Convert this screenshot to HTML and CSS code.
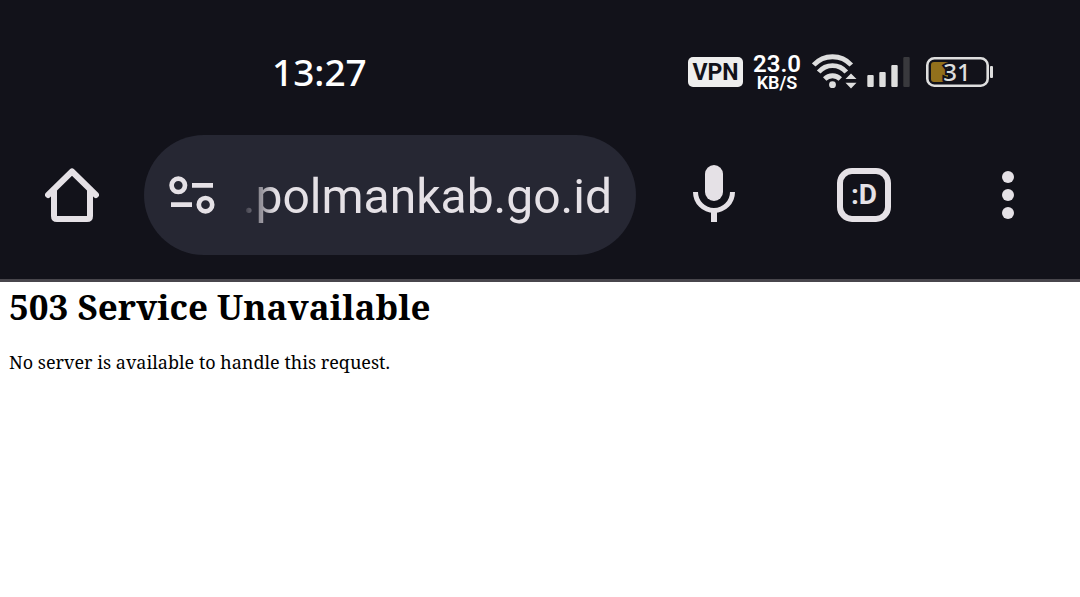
FILE: index.html
```html
<!DOCTYPE html>
<html lang="en">
<head>
  <meta charset="UTF-8">
  <meta name="viewport" content="width=device-width, initial-scale=1.0">
  <title>503 Service Unavailable</title>
  <link rel="stylesheet" href="styles.css">
</head>
<body>
  <header class="browser">
    <div class="status">
      <time class="clock">13:27</time>
      <div class="indicators">
        <span class="vpn">VPN</span>
        <div class="speed">
          <span class="speed-value">23.0</span>
          <span class="speed-unit">KB/S</span>
        </div>
        <svg class="ico-wifi" width="46" height="36" viewBox="0 0 46 36" aria-hidden="true">
          <g fill="none" stroke="#dedede" stroke-width="4.8">
            <path d="M1.7 11A25.5 25.5 0 0 1 39.3 11"/>
            <path d="M6.7 18A18 18 0 0 1 34.3 18"/>
            <path d="M12.7 25A11 11 0 0 1 28.3 25"/>
          </g>
          <circle cx="20.5" cy="30.7" r="3.4" fill="#dedede"/>
          <path d="M33.5 25L39 19.5L44.5 25ZM33.5 28.7H44.5L39 34.5Z" fill="#dedede"/>
        </svg>
        <svg class="ico-signal" width="43" height="30" viewBox="0 0 43 30" aria-hidden="true">
          <g fill="#dedede">
            <rect x="0.3" y="18" width="6.4" height="12" rx="1"/>
            <rect x="12.3" y="15" width="6.4" height="15" rx="1"/>
            <rect x="24.3" y="8" width="6.4" height="22" rx="1"/>
          </g>
          <rect x="36.3" y="0" width="6.4" height="30" rx="1" fill="#39393d"/>
        </svg>
        <div class="battery">
          <svg width="67" height="30" viewBox="0 0 67 30" aria-hidden="true">
            <rect x="1.3" y="1.3" width="60.4" height="27.4" rx="7" fill="none" stroke="#dedede" stroke-width="2.6"/>
            <path d="M8 5H22V25H8Q5 25 5 22V8Q5 5 8 5Z" fill="#92701c"/>
            <rect x="64" y="9" width="3" height="12" rx="1" fill="#dedede"/>
          </svg>
          <span class="battery-level">31</span>
        </div>
      </div>
    </div>

    <nav class="toolbar">
      <button class="tool" type="button" aria-label="Home">
        <svg width="54" height="54" viewBox="0 0 54 54" fill="none" stroke="#e5e1e6" stroke-width="6" stroke-linecap="round" stroke-linejoin="round">
          <path d="M3 27L27 3.5L51 27"/>
          <path d="M9 22V48Q9 51 12 51H42Q45 51 45 48V22"/>
        </svg>
      </button>
      <div class="address">
        <button class="site" type="button" aria-label="Site settings">
          <svg width="47" height="38" viewBox="0 0 47 38" fill="none" stroke="#e5e1e6" stroke-width="4.7">
            <circle cx="9.3" cy="9.3" r="6.7"/>
            <circle cx="36.5" cy="28.7" r="6.7"/>
            <path d="M23 9.3H44M2 28.7H23"/>
          </svg>
        </button>
        <input class="url" type="text" value=".polmankab.go.id" aria-label="Address">
      </div>
      <button class="tool tool-mic" type="button" aria-label="Voice search">
        <svg width="42" height="60" viewBox="0 0 42 60">
          <rect x="12" y="0" width="18" height="36" rx="9" fill="#e5e1e6"/>
          <path d="M2.5 27A18.5 18.5 0 0 0 39.5 27" fill="none" stroke="#e5e1e6" stroke-width="5"/>
          <rect x="18" y="46" width="6" height="11" fill="#e5e1e6"/>
        </svg>
      </button>
      <button class="tool" type="button" aria-label="Tabs">
        <span class="tabs">:D</span>
      </button>
      <button class="tool" type="button" aria-label="Menu">
        <svg width="12" height="48" viewBox="0 0 12 48" fill="#e5e1e6">
          <circle cx="6" cy="6" r="6"/>
          <circle cx="6" cy="24" r="6"/>
          <circle cx="6" cy="42" r="6"/>
        </svg>
      </button>
    </nav>
  </header>

  <main class="page">
    <h1>503 Service Unavailable</h1>
    <p>No server is available to handle this request.</p>
  </main>
</body>
</html>
```
FILE: styles.css
```css
body {
    margin: 0;
    background-color: #fff;
}

button, input {
    margin: 0;
    padding: 0;
    border: none;
    background: none;
    font-family: Roboto, sans-serif;
    color: #e5e1e6;
}

svg {
    display: block;
}

.browser {
    background-color: #12121a;
    border-bottom: 3px solid #48464c;
}

/* status bar */
.status {
    display: flex;
    justify-content: space-between;
    align-items: center;
    height: 36px;
    padding: 54px 87px 45px 272px;
    font-family: "Noto Sans", sans-serif;
    color: #fff;
}

.clock {
    font-size: 37px;
    font-weight: 500;
    line-height: 38px;
}

.indicators {
    display: flex;
    align-items: center;
}

.vpn {
    width: 55px;
    padding-top: 2px;
    border-radius: 5px;
    background-color: #eee;
    font-family: Roboto, sans-serif;
    font-size: 23px;
    font-weight: 700;
    line-height: 28px;
    text-align: center;
    color: #12121a;
}

.speed {
    display: flex;
    flex-direction: column;
    align-items: center;
    width: 50px;
    margin: 0 10px 0 9px;
    padding-top: 2px;
    font-family: Roboto, sans-serif;
    font-weight: 600;
}
.speed-value {
    font-size: 24px;
    line-height: 20px;
}
.speed-unit {
    font-size: 18px;
    line-height: 18px;
}

.ico-signal {
    margin: 0 16px 0 9px;
}

.battery {
    position: relative;
}
.battery-level {
    position: absolute;
    top: 0;
    left: 0;
    width: 62px;
    font-size: 24px;
    font-weight: 500;
    line-height: 30px;
    text-align: center;
    color: #dedede;
    -webkit-text-stroke: 4px #12121a;
    paint-order: stroke fill;
}

/* toolbar */
.toolbar {
    display: flex;
    align-items: center;
    padding-bottom: 24px;
}

.tool {
    display: flex;
    flex: none;
    justify-content: center;
    align-items: center;
    width: 144px;
    height: 120px;
}
.tool-mic {
    width: 156px;
}

.address {
    display: flex;
    flex: 1;
    align-items: center;
    min-width: 0;
    height: 120px;
    padding: 0 24px 0 25px;
    box-sizing: border-box;
    border-radius: 60px;
    background-color: #262733;
}

.site {
    flex: none;
    margin-right: 24px;
}

.url {
    flex: 1;
    min-width: 0;
    height: 72px;
    padding-top: 2px;
    box-sizing: border-box;
    font-size: 48px;
    text-align: right;
    -webkit-mask-image: linear-gradient(to right, transparent, #000 36px);
    mask-image: linear-gradient(to right, transparent, #000 36px);
}

.tabs {
    width: 54px;
    height: 54px;
    box-sizing: border-box;
    border: 6px solid #e5e1e6;
    border-radius: 15px;
    font-size: 28px;
    font-weight: 700;
    line-height: 42px;
    text-align: center;
}

/* error page */
.page {
    padding: 4px 9px;
    font-family: "Noto Serif", "Liberation Serif", serif;
    font-size: 18px;
    color: #000;
}
.page h1 {
    margin: 0;
    font-size: 35px;
    line-height: 42px;
}
.page p {
    margin: 22px 0;
    line-height: 24px;
}
```
